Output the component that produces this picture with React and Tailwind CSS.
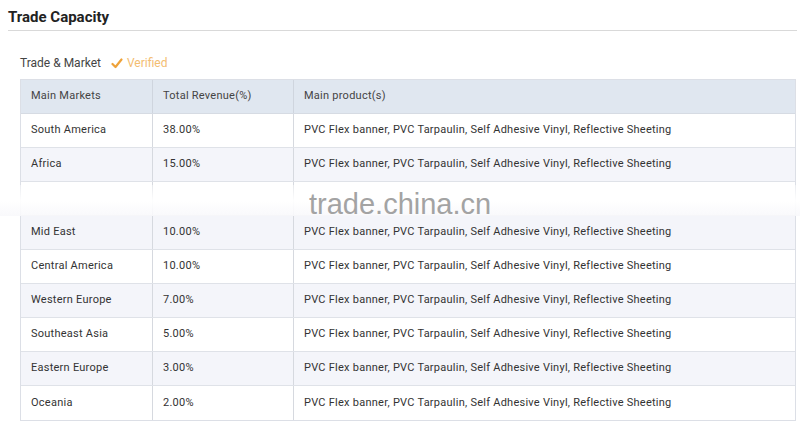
import React from "react";

const rows = [
  ["South America", "38.00%"],
  ["Africa", "15.00%"],
  null,
  ["Mid East", "10.00%"],
  ["Central America", "10.00%"],
  ["Western Europe", "7.00%"],
  ["Southeast Asia", "5.00%"],
  ["Eastern Europe", "3.00%"],
  ["Oceania", "2.00%"],
];

const product = "PVC Flex banner, PVC Tarpaulin, Self Adhesive Vinyl, Reflective Sheeting";

export default function App() {
  return (
    <div className="w-[800px] h-[428px] bg-white overflow-hidden text-[#333]" style={{ fontFamily: "Roboto, 'Liberation Sans', sans-serif" }}>
      <div className="pl-[8px] pr-[3px] pt-[6px]">
        <div className="h-[25px] border-b border-[#d9d9d9] text-[15px] font-bold text-[#222] leading-[22px]">Trade Capacity</div>
      </div>
      <div className="px-[20px] pt-[23px]">
        <div className="flex items-center h-[18px] text-[12px] leading-[18px]">
          <span className="text-[#444]">Trade &amp; Market</span>
          <svg className="ml-[10px]" width="12" height="11" viewBox="0 0 12 11">
            <path d="M1.5 6 L4.5 9 L10.5 1.5" fill="none" stroke="#eea23a" strokeWidth="2.2" strokeLinecap="round" strokeLinejoin="round" />
          </svg>
          <span className="ml-[4px] text-[#f3bd72]">Verified</span>
        </div>
        <div className="relative mt-[7px] w-[776px] border border-[#dcdfe6] tracking-[0.25px]">
          <div className="grid grid-cols-[132px_141px_1fr] h-[34px] bg-[#e0e7f0] text-[11px] text-[#444] border-b border-[#d6dbe3]">
            <div className="flex items-center pl-[10px] border-r border-[#cfd5de]">Main Markets</div>
            <div className="flex items-center pl-[10px] border-r border-[#cfd5de]">Total Revenue(%)</div>
            <div className="flex items-center pl-[10px]">Main product(s)</div>
          </div>
          {rows.map((r, i) => (
            <div
              key={i}
              className={`grid grid-cols-[132px_141px_1fr] h-[34px] text-[11px] text-[#333] ${i < rows.length - 1 ? "border-b border-[#dfe2e8]" : ""} ${i % 2 === 1 ? "bg-[#f4f5fa]" : "bg-white"}`}
            >
              <div className="flex items-center pl-[10px] border-r border-[#d6d9df]">{r ? r[0] : ""}</div>
              <div className="flex items-center pl-[10px] border-r border-[#d6d9df]">{r ? r[1] : ""}</div>
              <div className="flex items-center pl-[10px]">{r ? product : ""}</div>
            </div>
          ))}
          <div className="absolute left-[-21px] right-[-5px] top-[105px] h-[31px] bg-gradient-to-b from-white/40 via-white/95 to-[#f8f8fb]/90">
            <div className="absolute left-[309px] top-[3px] text-[29px] leading-[32px] tracking-normal text-[#a3a3a3]" style={{ fontFamily: "'Liberation Sans', Arial, sans-serif" }}>trade.china.cn</div>
          </div>
        </div>
      </div>
    </div>
  );
}
